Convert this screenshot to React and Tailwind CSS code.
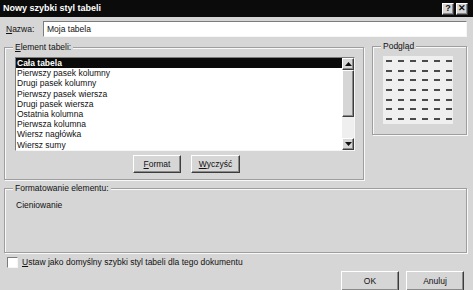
import React from "react";

const raised =
  "bg-[#d6d6d6] border border-t-white border-l-white border-r-[#3c3c3c] border-b-[#3c3c3c] shadow-[inset_-1px_-1px_0_#8a8a8a]";
const sunken =
  "border border-t-[#7c7c7c] border-l-[#7c7c7c] border-r-[#f6f6f6] border-b-[#f6f6f6]";
const groupBox =
  "relative border border-[#9e9e9e] shadow-[inset_1px_1px_0_#f8f8f8,1px_1px_0_#f8f8f8]";

const Legend = ({ children, className = "" }) => (
  <span className={`absolute -top-[6px] left-[8px] px-[2px] bg-[#d6d6d6] leading-[10px] ${className}`}>
    {children}
  </span>
);

const Arrow = ({ down }) => (
  <svg width="7" height="4" viewBox="0 0 7 4">
    {down ? <path d="M0 0h7L3.5 4z" fill="#111" /> : <path d="M0 4h7L3.5 0z" fill="#111" />}
  </svg>
);

const App = () => {
  const items = [
    "Pierwszy pasek kolumny",
    "Drugi pasek kolumny",
    "Pierwszy pasek wiersza",
    "Drugi pasek wiersza",
    "Ostatnia kolumna",
    "Pierwsza kolumna",
    "Wiersz nagłówka",
    "Wiersz sumy",
  ];
  const dashes = Array.from({ length: 42 }, (_, i) => i);

  return (
    <div className="w-[473px] h-[290px] overflow-hidden bg-[#d6d6d6] font-['Liberation_Sans',Arial,sans-serif] text-[8.5px] text-[#111]">
      {/* title bar */}
      <div className="h-[17px] bg-[#0b0b0b] flex items-center pl-[3px] pr-[5px]">
        <span className="text-white font-bold text-[9px]">Nowy szybki styl tabeli</span>
        <div className="ml-auto flex gap-[2px]">
          <div className={`${raised} w-[12px] h-[12px] flex items-center justify-center font-bold text-[9px] leading-none`}>?</div>
          <div className={`${raised} w-[12px] h-[12px] flex items-center justify-center font-bold text-[9px] leading-none`}>✕</div>
        </div>
      </div>

      <div className="px-[4px]">
        {/* name */}
        <div className="mt-[4px] flex items-center h-[16px]">
          <span className="w-[39px] pl-[2px]"><u>N</u>azwa:</span>
          <div className={`${sunken} flex-1 mr-[2px] h-[16px] bg-white flex items-center pl-[3px]`}>Moja tabela</div>
        </div>

        {/* element + preview */}
        <div className="mt-[10px] flex gap-[8px] items-start">
          <div className={`${groupBox} w-[360px] h-[133px] pl-[10px] pt-[9px]`}>
            <Legend><u>E</u>lement tabeli:</Legend>
            <div className={`${sunken} w-[340px] h-[94px] bg-white flex`}>
              <div className="flex-1 overflow-hidden">
                <div className="h-[10.2px] leading-[10.2px] bg-[#0a0a0a] text-white font-bold pl-[1px]">Cała tabela</div>
                {items.map((t) => (
                  <div key={t} className="h-[10.2px] leading-[10.2px] pl-[1px]">{t}</div>
                ))}
              </div>
              <div className="w-[12px] flex flex-col">
                <div className={`${raised} h-[12px] flex items-center justify-center`}><Arrow /></div>
                <div className={`${raised} h-[47px]`} />
                <div className="flex-1 bg-[#efefef]" />
                <div className={`${raised} h-[12px] flex items-center justify-center`}><Arrow down /></div>
              </div>
            </div>
            <div className="mt-[4px] ml-[118px] flex gap-[10px]">
              <div className={`${raised} w-[48px] h-[18px] flex items-center justify-center`}><span><u>F</u>ormat</span></div>
              <div className={`${raised} w-[49px] h-[18px] flex items-center justify-center`}><span><u>W</u>yczyść</span></div>
            </div>
          </div>

          <div className={`${groupBox} w-[95px] h-[89px] -mt-[1px] pl-[10px] pt-[9px]`}>
            <Legend className="left-[5px]">Podgląd</Legend>
            <div className="w-[70px] h-[68px] bg-[#efefef] pl-[3px] pt-[4px]">
              <div className="grid grid-cols-6 w-fit gap-x-[6px] gap-y-[7.7px]">
                {dashes.map((d) => (
                  <div key={d} className="w-[6px] h-[2px] bg-[#4a4a4a]" />
                ))}
              </div>
            </div>
          </div>
        </div>

        {/* formatting */}
        <div className={`${groupBox} mt-[8px] w-[463px] h-[65px] pl-[11px] pt-[10px]`}>
          <Legend>Formatowanie elementu:</Legend>
          <div>Cieniowanie</div>
        </div>

        {/* checkbox */}
        <div className="mt-[4px] flex items-center h-[11px]">
          <div className={`${sunken} ml-[3px] w-[11px] h-[11px] bg-white`} />
          <span className="ml-[4px]"><u>U</u>staw jako domyślny szybki styl tabeli dla tego dokumentu</span>
        </div>

        {/* buttons */}
        <div className="mt-[3px] flex justify-end gap-[7px] mr-[5px]">
          <div className={`${raised} w-[58px] h-[20px] flex items-center justify-center`}>OK</div>
          <div className={`${raised} w-[58px] h-[20px] flex items-center justify-center`}>Anuluj</div>
        </div>
      </div>
    </div>
  );
};

export default App;
